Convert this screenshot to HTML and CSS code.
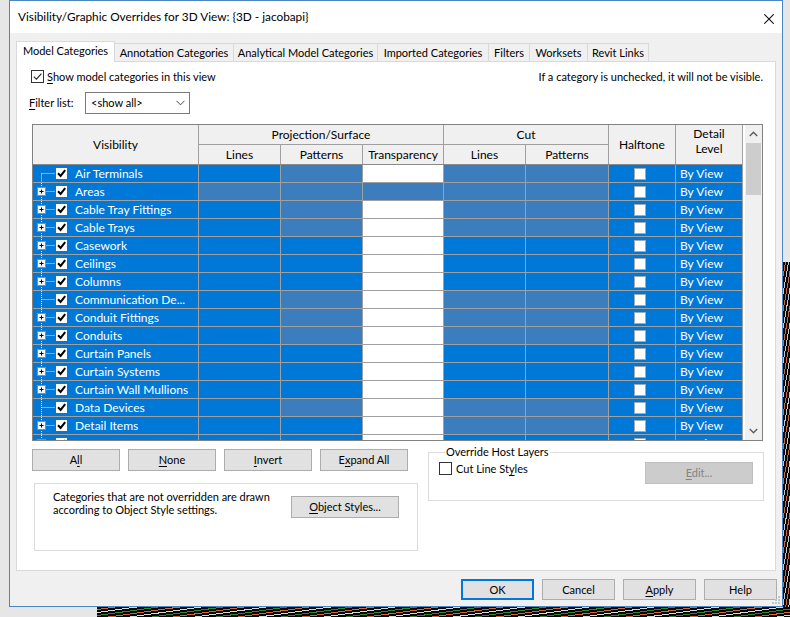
FILE: index.html
```html
<!DOCTYPE html>
<html>
<head>
<meta charset="utf-8">
<title>Visibility/Graphic Overrides</title>
<link rel="stylesheet" href="styles.css">
</head>
<body>
<svg class="defs" width="0" height="0" aria-hidden="true">
  <defs>
    <symbol id="t-plus" viewBox="0 0 22 17">
      <path d="M8.5 0V17M8.5 8.5H22" stroke="#e6eef7" stroke-dasharray="1 1" fill="none"/>
      <rect x="4.5" y="4.5" width="8" height="8" fill="#f4f4f4" stroke="#8c8c8c"/>
      <path d="M6.5 8.5h4M8.5 6.5v4" stroke="#000" fill="none"/>
    </symbol>
    <symbol id="t-leaf" viewBox="0 0 22 17">
      <path d="M8.5 0V17M8.5 8.5H22" stroke="#e6eef7" stroke-dasharray="1 1" fill="none"/>
    </symbol>
    <symbol id="t-first" viewBox="0 0 22 17">
      <path d="M8.5 8.5V17M8.5 8.5H22" stroke="#e6eef7" stroke-dasharray="1 1" fill="none"/>
    </symbol>
    <symbol id="vchk" viewBox="0 0 11 11">
      <rect width="11" height="11" fill="#fff"/>
      <path d="M2 5.3l2.6 2.6L9.2 2.2" stroke="#000" stroke-width="2" fill="none"/>
    </symbol>
  </defs>
</svg>
<div class="desktop">
  <div class="dialog">
    <div class="titlebar">
      <span class="title">Visibility/Graphic Overrides for 3D View: {3D - jacobapi}</span>
      <svg class="close" width="10" height="10" viewBox="0 0 10 10"><path d="M0.3 0.3L9.7 9.7M9.7 0.3L0.3 9.7" stroke="#111" stroke-width="1.1"/></svg>
    </div>
    <div class="client">
      <div class="tabs">
        <div class="tab active">Model Categories</div>
        <div class="tab">Annotation Categories</div>
        <div class="tab">Analytical Model Categories</div>
        <div class="tab">Imported Categories</div>
        <div class="tab">Filters</div>
        <div class="tab">Worksets</div>
        <div class="tab">Revit Links</div>
      </div>
      <div class="panel">
        <div class="toprow">
          <label class="chk">
            <span class="cb"><svg width="11" height="11" viewBox="0 0 11 11"><path d="M1.8 5.6l2.6 2.6L9.4 2.6" stroke="#222" stroke-width="1.1" fill="none"/></svg></span>
            <span><u>S</u>how model categories in this view</span>
          </label>
          <span class="hint">If a category is unchecked, it will not be visible.</span>
        </div>
        <div class="filterrow">
          <span class="flabel"><u>F</u>ilter list:</span>
          <div class="select">
            <span>&lt;show all&gt;</span>
            <svg width="9" height="6" viewBox="0 0 9 6"><path d="M0.5 0.8L4.5 4.8L8.5 0.8" stroke="#444" fill="none"/></svg>
          </div>
        </div>

        <div class="tablebox">
          <div class="gridmain">
            <div class="ghead">
              <div class="h h-vis">Visibility</div>
              <div class="h h-proj">Projection/Surface</div>
              <div class="h h-cut">Cut</div>
              <div class="h h-half">Halftone</div>
              <div class="h h-detail">Detail<br>Level</div>
              <div class="h">Lines</div>
              <div class="h">Patterns</div>
              <div class="h">Transparency</div>
              <div class="h">Lines</div>
              <div class="h">Patterns</div>
            </div>
            <div class="gbody">
              <div class="row"><div class="c vis"><svg class="tree"><use href="#t-first"/></svg><svg class="vcb"><use href="#vchk"/></svg><span class="nm">Air Terminals</span></div><div class="c"></div><div class="c pat"></div><div class="c wh"></div><div class="c pat"></div><div class="c pat"></div><div class="c ht"><span class="hcb"></span></div><div class="c dl">By View</div></div>
              <div class="row"><div class="c vis"><svg class="tree"><use href="#t-plus"/></svg><svg class="vcb"><use href="#vchk"/></svg><span class="nm">Areas</span></div><div class="c pat"></div><div class="c pat"></div><div class="c pat"></div><div class="c pat"></div><div class="c pat"></div><div class="c ht"><span class="hcb"></span></div><div class="c dl">By View</div></div>
              <div class="row"><div class="c vis"><svg class="tree"><use href="#t-plus"/></svg><svg class="vcb"><use href="#vchk"/></svg><span class="nm">Cable Tray Fittings</span></div><div class="c"></div><div class="c pat"></div><div class="c wh"></div><div class="c pat"></div><div class="c pat"></div><div class="c ht"><span class="hcb"></span></div><div class="c dl">By View</div></div>
              <div class="row"><div class="c vis"><svg class="tree"><use href="#t-plus"/></svg><svg class="vcb"><use href="#vchk"/></svg><span class="nm">Cable Trays</span></div><div class="c"></div><div class="c pat"></div><div class="c wh"></div><div class="c pat"></div><div class="c pat"></div><div class="c ht"><span class="hcb"></span></div><div class="c dl">By View</div></div>
              <div class="row"><div class="c vis"><svg class="tree"><use href="#t-plus"/></svg><svg class="vcb"><use href="#vchk"/></svg><span class="nm">Casework</span></div><div class="c"></div><div class="c"></div><div class="c wh"></div><div class="c"></div><div class="c"></div><div class="c ht"><span class="hcb"></span></div><div class="c dl">By View</div></div>
              <div class="row"><div class="c vis"><svg class="tree"><use href="#t-plus"/></svg><svg class="vcb"><use href="#vchk"/></svg><span class="nm">Ceilings</span></div><div class="c"></div><div class="c"></div><div class="c wh"></div><div class="c"></div><div class="c"></div><div class="c ht"><span class="hcb"></span></div><div class="c dl">By View</div></div>
              <div class="row"><div class="c vis"><svg class="tree"><use href="#t-plus"/></svg><svg class="vcb"><use href="#vchk"/></svg><span class="nm">Columns</span></div><div class="c"></div><div class="c"></div><div class="c wh"></div><div class="c"></div><div class="c"></div><div class="c ht"><span class="hcb"></span></div><div class="c dl">By View</div></div>
              <div class="row"><div class="c vis"><svg class="tree"><use href="#t-leaf"/></svg><svg class="vcb"><use href="#vchk"/></svg><span class="nm">Communication De...</span></div><div class="c"></div><div class="c pat"></div><div class="c wh"></div><div class="c pat"></div><div class="c pat"></div><div class="c ht"><span class="hcb"></span></div><div class="c dl">By View</div></div>
              <div class="row"><div class="c vis"><svg class="tree"><use href="#t-plus"/></svg><svg class="vcb"><use href="#vchk"/></svg><span class="nm">Conduit Fittings</span></div><div class="c"></div><div class="c pat"></div><div class="c wh"></div><div class="c pat"></div><div class="c pat"></div><div class="c ht"><span class="hcb"></span></div><div class="c dl">By View</div></div>
              <div class="row"><div class="c vis"><svg class="tree"><use href="#t-plus"/></svg><svg class="vcb"><use href="#vchk"/></svg><span class="nm">Conduits</span></div><div class="c"></div><div class="c pat"></div><div class="c wh"></div><div class="c pat"></div><div class="c pat"></div><div class="c ht"><span class="hcb"></span></div><div class="c dl">By View</div></div>
              <div class="row"><div class="c vis"><svg class="tree"><use href="#t-plus"/></svg><svg class="vcb"><use href="#vchk"/></svg><span class="nm">Curtain Panels</span></div><div class="c"></div><div class="c"></div><div class="c wh"></div><div class="c"></div><div class="c"></div><div class="c ht"><span class="hcb"></span></div><div class="c dl">By View</div></div>
              <div class="row"><div class="c vis"><svg class="tree"><use href="#t-plus"/></svg><svg class="vcb"><use href="#vchk"/></svg><span class="nm">Curtain Systems</span></div><div class="c"></div><div class="c"></div><div class="c wh"></div><div class="c"></div><div class="c"></div><div class="c ht"><span class="hcb"></span></div><div class="c dl">By View</div></div>
              <div class="row"><div class="c vis"><svg class="tree"><use href="#t-plus"/></svg><svg class="vcb"><use href="#vchk"/></svg><span class="nm">Curtain Wall Mullions</span></div><div class="c"></div><div class="c"></div><div class="c wh"></div><div class="c"></div><div class="c"></div><div class="c ht"><span class="hcb"></span></div><div class="c dl">By View</div></div>
              <div class="row"><div class="c vis"><svg class="tree"><use href="#t-leaf"/></svg><svg class="vcb"><use href="#vchk"/></svg><span class="nm">Data Devices</span></div><div class="c"></div><div class="c pat"></div><div class="c wh"></div><div class="c pat"></div><div class="c pat"></div><div class="c ht"><span class="hcb"></span></div><div class="c dl">By View</div></div>
              <div class="row"><div class="c vis"><svg class="tree"><use href="#t-plus"/></svg><svg class="vcb"><use href="#vchk"/></svg><span class="nm">Detail Items</span></div><div class="c"></div><div class="c"></div><div class="c wh"></div><div class="c pat"></div><div class="c pat"></div><div class="c ht"><span class="hcb"></span></div><div class="c dl">By View</div></div>
              <div class="row"><div class="c vis"><svg class="tree"><use href="#t-plus"/></svg><svg class="vcb"><use href="#vchk"/></svg><span class="nm">Doors</span></div><div class="c"></div><div class="c"></div><div class="c wh"></div><div class="c"></div><div class="c"></div><div class="c ht"><span class="hcb"></span></div><div class="c dl">By View</div></div>
            </div>
          </div>
          <div class="vscroll">
            <div class="sarrow top"><svg width="9" height="6" viewBox="0 0 9 6"><path d="M0.8 5L4.5 1.3L8.2 5" stroke="#606060" stroke-width="1.5" fill="none"/></svg></div>
            <div class="thumb"></div>
            <div class="track"></div>
            <div class="sarrow bottom"><svg width="9" height="6" viewBox="0 0 9 6"><path d="M0.8 1L4.5 4.7L8.2 1" stroke="#606060" stroke-width="1.5" fill="none"/></svg></div>
          </div>
        </div>

        <div class="lower">
          <div class="lowerleft">
            <div class="btnrow">
              <button class="btn">A<u>l</u>l</button>
              <button class="btn"><u>N</u>one</button>
              <button class="btn"><u>I</u>nvert</button>
              <button class="btn">E<u>x</u>pand All</button>
            </div>
            <div class="infobox">
              <p class="infotext">Categories that are not overridden are drawn<br>according to Object Style settings.</p>
              <button class="btn objbtn"><u>O</u>bject Styles...</button>
            </div>
          </div>
          <fieldset class="group">
            <legend>Override Host Layers</legend>
            <div class="grouprow">
              <label class="chk2"><span class="cb"></span><span>Cut Line St<u>y</u>les</span></label>
              <button class="btn edit" disabled><u>E</u>dit...</button>
            </div>
          </fieldset>
        </div>
      </div>
      <div class="footer">
        <button class="btn fbtn ok">OK</button>
        <button class="btn fbtn">Cancel</button>
        <button class="btn fbtn"><u>A</u>pply</button>
        <button class="btn fbtn">Help</button>
      </div>
    </div>
    <svg class="grip" width="9" height="9" viewBox="0 0 9 9"><path d="M6 0h2v2H6zM3 3h2v2H3zM6 3h2v2H6zM0 6h2v2H0zM3 6h2v2H3zM6 6h2v2H6z" fill="#c2c2c2"/></svg>
  </div>
</div>
</body>
</html>
```

FILE: styles.css
```css
* { box-sizing: border-box; }

html, body {
  margin: 0;
  padding: 0;
}

body {
  font-family: Lato, "Open Sans", sans-serif;
  font-size: 11px;
  line-height: 16px;
  color: #000;
}

.defs {
  position: absolute;
  width: 0;
  height: 0;
  overflow: hidden;
}

u { text-decoration-thickness: 1px; text-underline-offset: 2px; }

.desktop {
  width: 790px;
  height: 617px;
  overflow: hidden;
  padding-left: 9px;
  background:
    repeating-linear-gradient(172deg, #050505 0 2px, #d4692f 2px 3px, #050505 3px 5px, #d8d8d8 5px 6px, #050505 6px 8px, #2d8a2d 8px 9px) 97px 607px / 693px 10px no-repeat,
    repeating-linear-gradient(100deg, #050505 0 2px, #d4692f 2px 3px, #050505 3px 5px, #c8c8c8 5px 6px) 783px 262px / 7px 345px no-repeat,
    #e6e6e6;
}

.dialog {
  width: 774px;
  height: 607px;
  border: 1px solid #4c86c2;
  background: #f0f0f0;
  display: flex;
  flex-direction: column;
  position: relative;
}

.titlebar {
  flex: none;
  height: 32px;
  background: #fff;
  display: flex;
  align-items: center;
  justify-content: space-between;
  padding: 0 8px 0 8px;
  font-size: 11.8px;
}

.close { margin-top: 3px; }

.client {
  flex: 1;
  display: flex;
  flex-direction: column;
  padding: 8px 6px 0 6px;
}

/* tabs */
.tabs {
  display: flex;
  align-items: flex-end;
  height: 20px;
}

.tab {
  height: 18px;
  line-height: 17px;
  margin-left: -1px;
  border: 1px solid #d9d9d9;
  border-bottom: none;
  background: #f0f0f0;
  text-align: center;
  white-space: nowrap;
}

.tab.active {
  height: 21px;
  line-height: 18px;
  margin-left: 0;
  margin-bottom: -1px;
  background: #fff;
  position: relative;
  z-index: 1;
}

.tab:nth-child(1) { width: 99px; }
.tab:nth-child(2) { width: 120px; }
.tab:nth-child(3) { width: 145px; }
.tab:nth-child(4) { width: 112px; }
.tab:nth-child(5) { width: 42px; }
.tab:nth-child(6) { width: 59px; }
.tab:nth-child(7) { width: 62px; }

.panel {
  flex: none;
  height: 510px;
  background: #fff;
  border: 1px solid #d9d9d9;
}

/* top rows */
.toprow {
  height: 13px;
  margin: 8px 12px 0 14px;
  display: flex;
  align-items: center;
  justify-content: space-between;
}

.chk, .chk2 {
  display: flex;
  align-items: center;
  gap: 3px;
}

.chk2 { gap: 4px; }

.cb {
  width: 13px;
  height: 13px;
  border: 1px solid #333;
  background: #fff;
  display: block;
}

.cb svg { display: block; }

.filterrow {
  margin: 9px 0 0 12px;
  display: flex;
  align-items: center;
}

.flabel { width: 56px; }

.select {
  width: 105px;
  height: 22px;
  border: 1px solid #7a7a7a;
  display: flex;
  align-items: center;
  justify-content: space-between;
  padding: 0 4px 0 5px;
}

.select svg { display: block; }

/* grid */
.tablebox {
  margin: 10px 0 0 15px;
  width: 731px;
  height: 317px;
  border: 1px solid #828282;
  display: flex;
}

.gridmain {
  width: 710px;
  border-right: 1px solid #a0a0a0;
  font-size: 12px;
}

.ghead, .row {
  display: grid;
  grid-template-columns: 165px 81px 81px 80px 81px 82px 66px 66px;
  column-gap: 1px;
}

.ghead {
  grid-template-rows: 19px 19px;
  row-gap: 1px;
  background: #a0a0a0;
  border-bottom: 1px solid #8a8a8a;
}

.h {
  background: #f0f0f0;
  display: flex;
  align-items: center;
  justify-content: center;
  white-space: nowrap;
}

.h-vis { grid-row: 1 / 3; grid-column: 1; }
.h-proj { grid-row: 1; grid-column: 2 / 5; }
.h-cut { grid-row: 1; grid-column: 5 / 7; }
.h-half { grid-row: 1 / 3; grid-column: 7; }
.h-detail {
  grid-row: 1 / 3;
  grid-column: 8;
  align-items: flex-start;
  text-align: center;
  line-height: 15px;
  padding-top: 1px;
}

.gbody {
  height: 275px;
  overflow: hidden;
  display: flex;
  flex-direction: column;
  gap: 1px;
  background: #a0a0a0;
}

.row {
  flex: none;
  height: 17px;
  background: #a0a0a0;
}

.c {
  background: #0078d7;
  color: #fff;
  line-height: 17px;
  white-space: nowrap;
  overflow: hidden;
}

.c.pat { background: #3c7dbd; }

.c.wh { background: #fff; }

.vis {
  display: flex;
  align-items: center;
}

.tree {
  flex: none;
  width: 22px;
  height: 17px;
  display: block;
}

.vcb {
  flex: none;
  width: 11px;
  height: 11px;
  margin-left: 1px;
  display: block;
}

.nm { margin-left: 8px; }

.ht {
  display: flex;
  align-items: center;
  padding-left: 25px;
}

.hcb {
  width: 12px;
  height: 12px;
  background: #fff;
  border: 1px solid #a8a8a8;
}

.dl { padding-left: 4px; }

/* scrollbar */
.vscroll {
  width: 19px;
  border-left: 2px solid #fff;
  background: #f0f0f0;
  display: flex;
  flex-direction: column;
  align-items: center;
}

.sarrow {
  height: 18px;
  width: 100%;
  display: flex;
  align-items: center;
  justify-content: center;
}

.sarrow svg { display: block; }

.thumb {
  width: 15px;
  height: 52px;
  background: #cdcdcd;
}

.track { flex: 1; }

/* lower area */
.lower {
  margin: 8px 0 0 15px;
  display: flex;
  align-items: flex-start;
}

.lowerleft { width: 386px; }

.btnrow {
  display: flex;
  gap: 8px;
}

.btn {
  font: inherit;
  color: #000;
  width: 88px;
  height: 22px;
  padding: 0;
  background: #e1e1e1;
  border: 1px solid #adadad;
  border-radius: 0;
  line-height: 18px;
}

.infobox {
  margin: 12px 0 0 2px;
  width: 384px;
  height: 68px;
  border: 1px solid #dcdcdc;
  display: flex;
  align-items: flex-start;
  padding: 6px 0 0 18px;
}

.infotext {
  margin: 0;
  width: 238px;
  line-height: 13px;
  white-space: nowrap;
}

.objbtn {
  width: 108px;
  margin-top: 6px;
}

.group {
  margin: -5px 0 0 10px;
  width: 336px;
  height: 57px;
  min-width: 0;
  border: 1px solid #dcdcdc;
  padding: 2px 10px 0 10px;
}

.group legend {
  margin-left: 6px;
  padding: 0 1px;
  line-height: 16px;
}

.grouprow {
  display: flex;
  justify-content: space-between;
  align-items: flex-start;
}

.chk2 { height: 13px; }

.edit {
  width: 108px;
  height: 22px;
  background: #cccccc;
  border-color: #bfbfbf;
  color: #838383;
}

/* footer */
.footer {
  display: flex;
  justify-content: flex-end;
  gap: 8px;
  padding: 8px 0 0 0;
  margin-right: -1px;
}

.fbtn {
  width: 73px;
  height: 21px;
  line-height: 17px;
}

.fbtn.ok { border: 2px solid #0078d7; line-height: 15px; }

.grip {
  position: absolute;
  right: 1px;
  bottom: 1px;
  display: block;
}
```
